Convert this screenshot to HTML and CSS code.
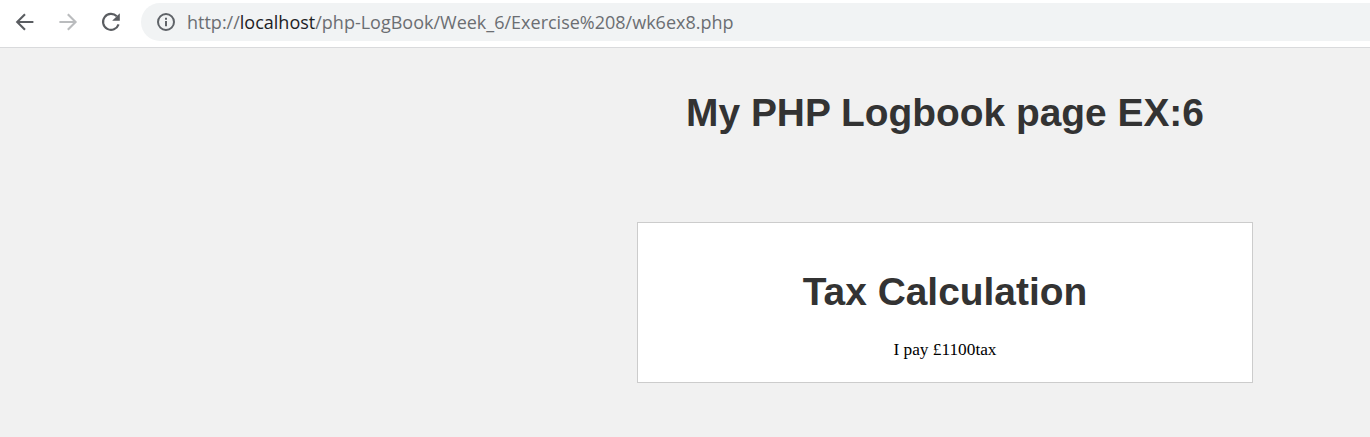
FILE: index.html
```html
<!DOCTYPE html>
<html lang="en">
<head>
<meta charset="utf-8">
<title>My PHP Logbook page</title>
<link rel="stylesheet" href="styles.css">
</head>
<body>
<header class="toolbar">
  <svg class="nav" viewBox="0 0 24 24"><path d="M20.4 12H4.5M12 4.2L4.2 12l7.8 7.8"/></svg>
  <svg class="nav nav-off" viewBox="0 0 24 24"><path d="M3.4 12h16M11.8 4.2l7.8 7.8-7.8 7.8"/></svg>
  <svg class="nav" viewBox="0 0 24 24"><path d="M17.8 6.3A8 8 0 1 0 19.6 14.4"/><path class="solid" d="M20.8 3.2v7.6H13.2z"/></svg>
  <div class="address">
    <svg class="info" viewBox="0 0 20 20"><circle cx="10" cy="10" r="8"/><path d="M10 9v5.2M10 5.8v2"/></svg>
    <span class="url">http://<span class="host">localhost</span>/php-LogBook/Week_6/Exercise%208/wk6ex8.php</span>
  </div>
</header>
<main class="page">
  <h1 class="title">My PHP Logbook page EX:6</h1>
  <section class="card">
    <h1 class="title">Tax Calculation</h1>
    <p class="result">I pay £1100tax</p>
  </section>
</main>
</body>
</html>
```
FILE: styles.css
```css
* { box-sizing: border-box; }
body {
  margin: 0;
  height: 437px;
  overflow: hidden;
  background: #f1f1f1;
}
.toolbar {
  display: flex;
  height: 48px;
  padding: 3px 0 0 13px;
  background: #fff;
  border-bottom: 1px solid #d9dadc;
}
.nav {
  flex: none;
  width: 24px;
  height: 24px;
  margin: 7px 19px 0 0;
  fill: none;
  stroke: #5a5d61;
  stroke-width: 2.1;
}
.nav-off { stroke: #babcbe; }
.nav .solid { fill: #5a5d61; stroke: none; }
.address {
  display: flex;
  flex: 1;
  align-items: center;
  height: 38px;
  margin-left: -1px;
  padding-left: 15px;
  border-radius: 19px 0 0 19px;
  background: #f1f3f4;
}
.info {
  width: 20px;
  height: 20px;
  margin-right: 11px;
  fill: none;
  stroke: #5f6368;
  stroke-width: 2;
}
.url {
  font: 18px/24px "Open Sans", sans-serif;
  color: #6b6e72;
  white-space: nowrap;
}
.host { color: #202124; }
.page {
  width: 616px;
  margin-left: 637px;
  padding-top: 42px;
  text-align: center;
}
.title {
  margin: 0;
  font: bold 38.9px/46px "Liberation Sans", Arial, sans-serif;
  color: #333;
}
.card {
  height: 161px;
  margin-top: 86px;
  padding-top: 46px;
  background: #fff;
  border: 1px solid #ccc;
}
.result {
  margin: 25px 0 0;
  font: 17.3px/20px "Liberation Serif", "Times New Roman", serif;
  color: #000;
}
```
